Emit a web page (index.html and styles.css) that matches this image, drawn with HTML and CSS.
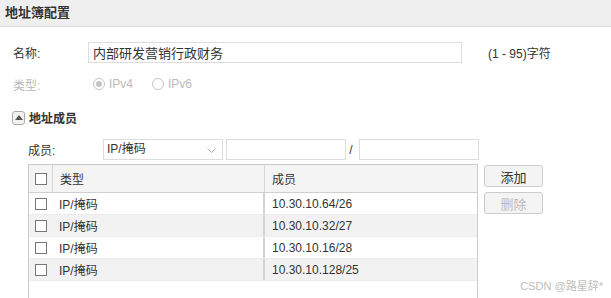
FILE: index.html
```html
<!DOCTYPE html>
<html lang="zh-CN">
<head>
    <meta charset="UTF-8">
    <title>地址簿配置</title>
    <link rel="stylesheet" href="styles.css">
</head>
<body>
    <div class="header">地址簿配置</div>

    <div class="form">
        <div class="row row-name">
            <span class="label">名称:</span>
            <input class="text name-input" type="text" value="内部研发营销行政财务">
            <span class="hint">(1 - 95)字符</span>
        </div>
        <div class="row row-type">
            <span class="label disabled">类型:</span>
            <label class="radio checked"><span class="dot"></span>IPv4</label>
            <label class="radio"><span class="dot"></span>IPv6</label>
        </div>

        <div class="section">
            <span class="toggle"><svg width="8" height="5" viewBox="0 0 8 5"><path d="M0 5 L4 0 L8 5 Z" fill="#555"/></svg></span>
            地址成员
        </div>

        <div class="members">
            <div class="row row-member">
                <span class="label">成员:</span>
                <div class="select">IP/掩码
                    <svg class="caret" width="9" height="5" viewBox="0 0 9 5"><path d="M0.5 0.5 L4.5 4.5 L8.5 0.5" fill="none" stroke="#aaa" stroke-width="1"/></svg>
                </div>
                <input class="text small-input" type="text">
                <span class="slash">/</span>
                <input class="text small-input" type="text">
            </div>

            <div class="grid-area">
                <div class="grid">
                    <div class="grid-head">
                        <div class="c-check"><span class="box"></span></div>
                        <div class="c-type">类型</div>
                        <div class="c-member">成员</div>
                    </div>
                    <div class="grid-row">
                        <div class="c-check"><span class="box"></span></div>
                        <div class="c-type">IP/掩码</div>
                        <div class="c-member">10.30.10.64/26</div>
                    </div>
                    <div class="grid-row odd">
                        <div class="c-check"><span class="box"></span></div>
                        <div class="c-type">IP/掩码</div>
                        <div class="c-member">10.30.10.32/27</div>
                    </div>
                    <div class="grid-row">
                        <div class="c-check"><span class="box"></span></div>
                        <div class="c-type">IP/掩码</div>
                        <div class="c-member">10.30.10.16/28</div>
                    </div>
                    <div class="grid-row odd">
                        <div class="c-check"><span class="box"></span></div>
                        <div class="c-type">IP/掩码</div>
                        <div class="c-member">10.30.10.128/25</div>
                    </div>
                </div>
                <div class="actions">
                    <button class="btn">添加</button>
                    <button class="btn" disabled>删除</button>
                </div>
            </div>
        </div>
    </div>

    <div class="watermark">CSDN @路星辞*</div>
</body>
</html>
```

FILE: styles.css
```css
body {
    margin: 0;
    font-family: "Liberation Sans", Arial, "Noto Sans CJK SC", sans-serif;
    font-size: 12px;
    color: #333;
    background: #fff;
    overflow: hidden;
    height: 298px;
    position: relative;
}

.header {
    height: 26px;
    line-height: 25px;
    padding-left: 5px;
    background: #efefef;
    border-bottom: 1px solid #dcdcdc;
    font-size: 13px;
    font-weight: bold;
    color: #333;
}

.form {
    padding-top: 15px;
}

.row {
    display: flex;
    align-items: center;
}

.label {
    display: inline-block;
}

.row-name .label,
.row-type .label {
    width: 75px;
    padding-left: 13px;
}

.disabled {
    color: #bbb;
}

.text {
    box-sizing: border-box;
    height: 21px;
    border: 1px solid #ddd;
    padding: 0 4px;
    font-family: inherit;
    font-size: 12px;
    color: #333;
    outline: none;
}

.name-input {
    width: 374px;
    font-size: 13px;
}

.hint {
    margin-left: 26px;
    color: #333;
}

.row-type {
    margin-top: 11px;
    height: 20px;
}

.radio {
    display: flex;
    align-items: center;
    color: #bbb;
    margin-right: 14px;
    font-size: 12px;
}

.radio .dot {
    box-sizing: border-box;
    width: 12px;
    height: 12px;
    border: 1px solid #c4c4c4;
    border-radius: 50%;
    margin-right: 4px;
    margin-left: 5px;
    position: relative;
}

.radio.checked .dot::after {
    content: "";
    position: absolute;
    left: 2px;
    top: 2px;
    width: 6px;
    height: 6px;
    border-radius: 50%;
    background: #c4c4c4;
}

.section {
    display: flex;
    align-items: center;
    margin-top: 15px;
    padding-left: 12px;
    font-weight: bold;
    font-size: 12px;
    color: #333;
}

.toggle {
    box-sizing: border-box;
    width: 13px;
    height: 14px;
    border: 1px solid #aaa;
    border-radius: 3px;
    background: #f2f2f2;
    display: flex;
    align-items: center;
    justify-content: center;
    margin-right: 4px;
}

.members {
    padding-left: 28px;
    margin-top: 13px;
}

.row-member .label {
    width: 75px;
}

.select {
    box-sizing: border-box;
    width: 120px;
    height: 21px;
    border: 1px solid #ddd;
    padding-left: 3px;
    line-height: 19px;
    position: relative;
    color: #333;
}

.caret {
    position: absolute;
    right: 6px;
    top: 8px;
}

.small-input {
    width: 120px;
    margin-left: 3px;
}

.slash {
    width: 10px;
    text-align: center;
    color: #333;
}

.grid-area {
    display: flex;
    margin-top: 4px;
}

.grid {
    box-sizing: border-box;
    width: 450px;
    height: 140px;
    border: 1px solid #ccc;
    border-bottom: none;
}

.grid-head,
.grid-row {
    display: flex;
    box-sizing: border-box;
}

.grid-head {
    height: 28px;
    background: #f4f4f4;
    border-bottom: 1px solid #cfcfcf;
    align-items: stretch;
}

.grid-row {
    height: 22px;
    border-bottom: 1px solid #ececec;
}

.grid-row.odd {
    background: #f2f2f2;
}

.c-check {
    width: 23px;
    display: flex;
    align-items: center;
    justify-content: center;
}

.grid-head .c-check {
    border-right: 1px solid #d6d6d6;
}

.c-type {
    width: 211px;
    padding-left: 7px;
    display: flex;
    align-items: center;
    box-sizing: border-box;
}

.c-member {
    flex: 1;
    padding-left: 7px;
    display: flex;
    align-items: center;
    border-left: 1px solid #d6d6d6;
}

.grid-row .c-member {
    border-left: 2px solid #d2d2d2;
}

.box {
    box-sizing: border-box;
    width: 12px;
    height: 12px;
    border: 1px solid #777;
    background: #fff;
}

.actions {
    display: flex;
    flex-direction: column;
    gap: 5px;
    margin-left: 6px;
    margin-top: 1px;
}

.btn {
    box-sizing: border-box;
    width: 59px;
    height: 22px;
    border: 1px solid #ccc;
    border-radius: 3px;
    background: #f4f4f4;
    font-family: inherit;
    font-size: 13px;
    color: #333;
    padding: 0;
}

.btn:disabled {
    color: #bbb;
}

.watermark {
    position: absolute;
    right: 8px;
    bottom: 5px;
    color: #bdbdbd;
    font-size: 11px;
}
```
